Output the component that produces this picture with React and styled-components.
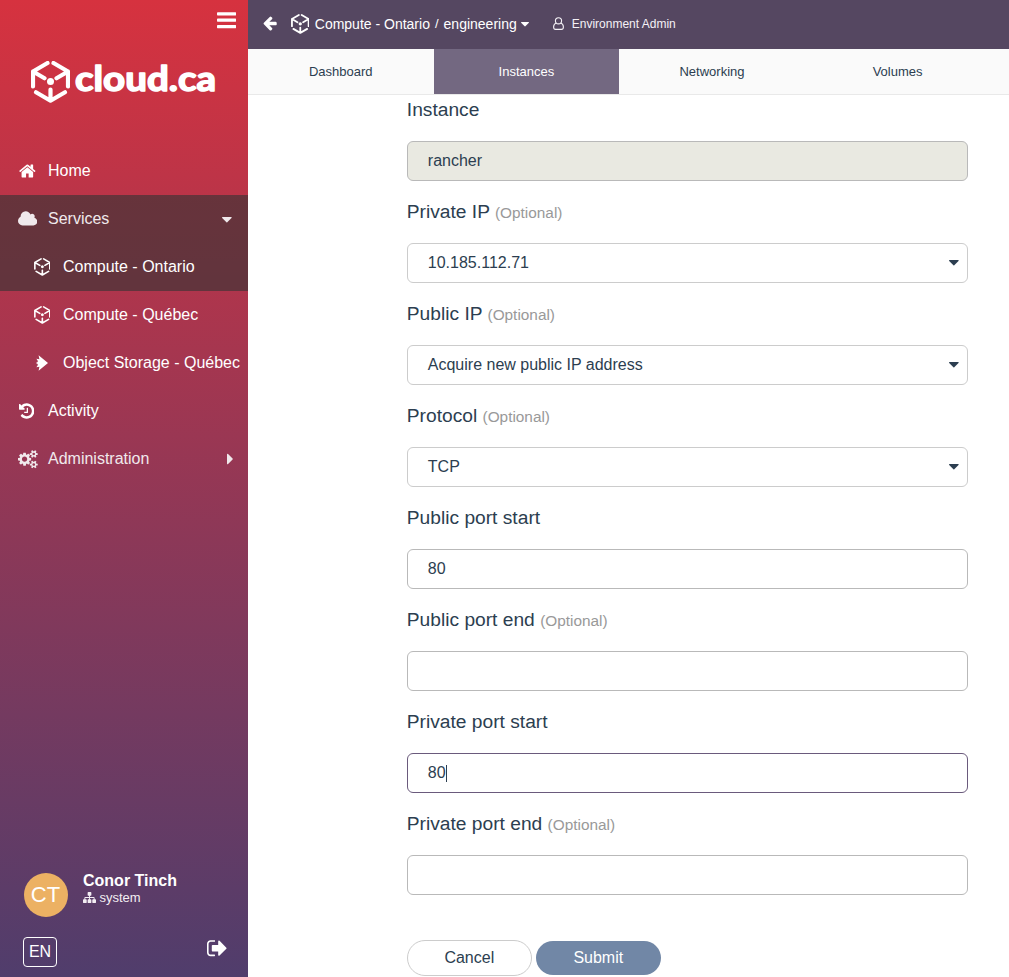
import React from "react";
import styled, { createGlobalStyle } from "styled-components";

const Global = createGlobalStyle`
  *, *::before, *::after { box-sizing: border-box; }
  body { margin: 0; font-family: "Liberation Sans", Arial, sans-serif; color: #2c3e50; background: #fff; overflow: hidden; }
`;

const GLYPHS = {
  bars: ["128 0 1536 1792", "M1664 1344v128q0 26-19 45t-45 19h-1408q-26 0-45-19t-19-45v-128q0-26 19-45t45-19h1408q26 0 45 19t19 45zm0-512v128q0 26-19 45t-45 19h-1408q-26 0-45-19t-19-45v-128q0-26 19-45t45-19h1408q26 0 45 19t19 45zm0-512v128q0 26-19 45t-45 19h-1408q-26 0-45-19t-19-45v-128q0-26 19-45t45-19h1408q26 0 45 19t19 45z"],
  home: ["64 0 1664 1792", "M1472 992v480q0 26-19 45t-45 19h-384v-384h-256v384h-384q-26 0-45-19t-19-45v-480q0-1 .5-3t.5-3l575-474 575 474q1 2 1 6zm223-69l-62 74q-8 9-21 11h-3q-13 0-21-7l-692-577-692 577q-12 8-24 7-13-2-21-11l-62-74q-8-10-7-23.5t11-21.5l719-599q32-26 76-26t76 26l244 204v-195q0-14 9-23t23-9h192q14 0 23 9t9 23v408l219 182q10 8 11 21.5t-7 23.5z"],
  cloud: ["64 0 1920 1792", "M1984 1152q0 159-112.5 271.5t-271.5 112.5h-1088q-185 0-316.5-131.5t-131.5-316.5q0-132 71-241.5t187-163.5q-2-28-2-43 0-212 150-362t362-150q158 0 286.5 88t187.5 230q70-62 166-62 106 0 181 75t75 181q0 75-41 138 129 30 213 134.5t84 239.5z"],
  history: ["128 0 1536 1792", "M1664 896q0 156-61 298t-164 245-245 164-298 61q-172 0-327-72.5t-264-204.5q-7-10-6.5-22.5t8.5-20.5l137-138q10-9 25-9 16 2 23 12 73 95 179 147t225 52q104 0 198.5-40.5t163.5-109.5 109.5-163.5 40.5-198.5-40.5-198.5-109.5-163.5-163.5-109.5-198.5-40.5q-98 0-188 35.5t-160 101.5l137 138q31 30 14 69-17 40-59 40h-448q-26 0-45-19t-19-45v-448q0-42 40-59 39-17 69 14l130 129q107-101 244.5-156.5t284.5-55.5q156 0 298 61t245 164 164 245 61 298zm-640-288v448q0 14-9 23t-23 9h-320q-14 0-23-9t-9-23v-64q0-14 9-23t23-9h224v-352q0-14 9-23t23-9h64q14 0 23 9t9 23z"],
  cogs: ["-64 0 1920 1792", "M832 896q0-106-75-181t-181-75-181 75-75 181 75 181 181 75 181-75 75-181zm768 512q0-52-38-90t-90-38-90 38-38 90q0 53 37.5 90.5t90.5 37.5 90.5-37.5 37.5-90.5zm0-1024q0-52-38-90t-90-38-90 38-38 90q0 53 37.5 90.5t90.5 37.5 90.5-37.5 37.5-90.5zm-384 421v185q0 10-7 19.5t-16 10.5l-155 24q-11 35-32 76 34 48 90 115 7 11 7 20 0 12-7 19-23 30-82.5 89.5t-78.5 59.5q-11 0-21-7l-115-90q-37 19-77 31-11 108-23 155-7 24-30 24h-186q-11 0-20-7.5t-10-17.5l-23-153q-34-10-75-31l-118 89q-7 7-20 7-11 0-21-8-144-133-144-160 0-9 7-19 10-14 41-53t47-61q-23-44-35-82l-152-24q-10-1-17-9.5t-7-19.5v-185q0-10 7-19.5t16-10.5l155-24q11-35 32-76-34-48-90-115-7-11-7-20 0-12 7-20 22-30 82-89t79-59q11 0 21 7l115 90q34-18 77-32 11-108 23-154 7-24 30-24h186q11 0 20 7.5t10 17.5l23 153q34 10 75 31l118-89q8-7 20-7 11 0 21 8 144 133 144 160 0 8-7 19-12 16-42 54t-45 60q23 48 34 82l152 23q10 2 17 10.5t7 19.5zm640 533v140q0 16-149 31-12 27-30 52 51 113 51 138 0 4-4 7-122 71-124 71-8 0-46-47t-52-68q-20 2-30 2t-30-2q-14 21-52 68t-46 47q-2 0-124-71-4-3-4-7 0-25 51-138-18-25-30-52-149-15-149-31v-140q0-16 149-31 13-29 30-52-51-113-51-138 0-4 4-7 4-2 35-20t59-34 30-16q8 0 46 46.5t52 67.5q20-2 30-2t30 2q51-71 92-112l6-2q4 0 124 70 4 3 4 7 0 25-51 138 17 23 30 52 149 15 149 31zm0-1024v140q0 16-149 31-12 27-30 52 51 113 51 138 0 4-4 7-122 71-124 71-8 0-46-47t-52-68q-20 2-30 2t-30-2q-14 21-52 68t-46 47q-2 0-124-71-4-3-4-7 0-25 51-138-18-25-30-52-149-15-149-31v-140q0-16 149-31 13-29 30-52-51-113-51-138 0-4 4-7 4-2 35-20t59-34 30-16q8 0 46 46.5t52 67.5q20-2 30-2t30 2q51-71 92-112l6-2q4 0 124 70 4 3 4 7 0 25-51 138 17 23 30 52 149 15 149 31z"],
  sitemap: ["0 0 1792 1792", "M1792 1248v320q0 40-28 68t-68 28h-320q-40 0-68-28t-28-68v-320q0-40 28-68t68-28h96v-192h-512v192h96q40 0 68 28t28 68v320q0 40-28 68t-68 28h-320q-40 0-68-28t-28-68v-320q0-40 28-68t68-28h96v-192h-512v192h96q40 0 68 28t28 68v320q0 40-28 68t-68 28h-320q-40 0-68-28t-28-68v-320q0-40 28-68t68-28h96v-192q0-52 38-90t90-38h512v-192h-96q-40 0-68-28t-28-68v-320q0-40 28-68t68-28h320q40 0 68 28t28 68v320q0 40-28 68t-68 28h-96v192h512q52 0 90 38t38 90v192h96q40 0 68 28t28 68z"],
  signOut: ["64 0 1600 1792", "M704 1440q0 4 1 20t.5 26.5-3 23.5-10 19.5-20.5 6.5h-320q-119 0-203.5-84.5t-84.5-203.5v-704q0-119 84.5-203.5t203.5-84.5h320q13 0 22.5 9.5t9.5 22.5q0 4 1 20t.5 26.5-3 23.5-10 19.5-20.5 6.5h-320q-66 0-113 47t-47 113v704q0 66 47 113t113 47h312l11.5 1 11.5 3 8 5.5 7 9 2 13.5zm928-544q0 26-19 45l-544 544q-19 19-45 19t-45-19-19-45v-288h-448q-26 0-45-19t-19-45v-384q0-26 19-45t45-19h448v-288q0-26 19-45t45-19 45 19l544 544q19 19 19 45z"],
  arrowLeft: ["128 0 1536 1792", "M1664 896v128q0 53-32.5 90.5t-84.5 37.5h-704l293 294q38 36 38 90t-38 90l-75 76q-37 37-90 37-52 0-91-37l-651-652q-37-37-37-90 0-52 37-91l651-650q38-38 91-38 52 0 90 38l75 74q38 38 38 91t-38 91l-293 293h704q52 0 84.5 37.5t32.5 90.5z"],
  caretDown: ["384 0 1024 1792", "M1408 704q0 26-19 45l-448 448q-19 19-45 19t-45-19l-448-448q-19-19-19-45t19-45 45-19h896q26 0 45 19t19 45z"],
  caretRight: ["608 0 576 1792", "M1184 896q0 26-19 45l-448 448q-19 19-45 19t-45-19-19-45v-896q0-26 19-45t45-19 45 19l448 448q19 19 19 45z"],
};

const Glyph = styled.svg`
  display: block;
  flex: none;
  height: ${(p) => p.$size}px;
  width: auto;
  margin-bottom: ${(p) => p.$lift || 0}px;
  fill: currentColor;
`;

function Icon({ name, size = 18, lift }) {
  const [box, d] = GLYPHS[name];
  return (
    <Glyph viewBox={box} $size={size} $lift={lift} aria-hidden="true">
      <path d={d} />
    </Glyph>
  );
}

function Cube({ size = 18, weight = 4.2 }) {
  return (
    <Glyph viewBox="0 0 39 42" $size={size} aria-hidden="true">
      <g fill="none" stroke="currentColor" strokeWidth={weight} strokeLinecap="round" strokeLinejoin="round">
        <path d="M16.5 2 2 10.500V25.500M2 10.500l11.500 6.800" />
        <path d="M22.500 2 37 10.500V25.500M37 10.500l-11.500 6.800" />
        <path d="M5 31.200 19.500 39.700 34 31.200M19.500 39.700V28.500" />
      </g>
      <circle cx="19.500" cy="20.600" r="3.500" />
    </Glyph>
  );
}

function StorageArrow() {
  return (
    <Glyph viewBox="0 0 12 16" $size={16} aria-hidden="true">
      <path d="M2.600 .2 12 8 2.600 15.800 3.400 11.700.4 12.300 2.200 9.600 0 8.800 1.800 8 0 7.200 2.200 6.400.4 3.700 3.400 4.300Z" />
    </Glyph>
  );
}

function PersonOutline() {
  return (
    <Glyph viewBox="0 0 11 13" $size={13} aria-hidden="true">
      <g fill="none" stroke="currentColor" strokeWidth="1.100">
        <circle cx="5.500" cy="3.800" r="3.100" />
        <path d="M3.200 6C1.400 6.600.6 8 .6 10c0 1.500.8 2.400 2 2.400h5.800c1.200 0 2-.9 2-2.400 0-2-.8-3.400-2.600-4" />
      </g>
    </Glyph>
  );
}

const Layout = styled.div`
  display: flex;
  height: 977px;
`;

const Sidebar = styled.aside`
  width: 248px;
  flex: none;
  display: flex;
  flex-direction: column;
  color: #fff;
  background: linear-gradient(#d6323f, #503d6c);
`;

const MenuToggle = styled.div`
  display: flex;
  justify-content: flex-end;
  padding: 9px 12px 0 0;
`;

const Brand = styled.div`
  display: flex;
  align-items: flex-start;
  height: 86px;
  margin-top: 30px;
  padding-left: 31px;
`;

const Wordmark = styled.svg`
  display: block;
  width: 146px;
  height: 42px;
  margin-left: 3px;
  overflow: visible;
  fill: #fff;
  stroke: #fff;
  stroke-width: 1.5px;
  stroke-linejoin: round;
  font: 700 33.5px Lato, sans-serif;
`;

const NavItem = styled.a`
  display: flex;
  align-items: center;
  height: 48px;
  padding-left: ${(p) => (p.$sub ? 26 : 18)}px;
  padding-right: ${(p) => p.$end || 0}px;
  font-size: 16px;
  white-space: nowrap;
  color: ${(p) => (p.$dim ? "#f0e9ec" : "#fff")};
  background: ${(p) => (p.$active ? "rgba(46, 51, 51, 0.6)" : "none")};
`;

const NavIcon = styled.span`
  display: flex;
  justify-content: ${(p) => (p.$sub ? "center" : "flex-start")};
  width: ${(p) => (p.$sub ? 32 : 30)}px;
  margin-right: ${(p) => (p.$sub ? 5 : 0)}px;
  padding-left: ${(p) => p.$inset || 0}px;
`;

const NavText = styled.span`
  flex: 1;
`;

const Account = styled.div`
  display: flex;
  margin-top: auto;
  padding-left: 24px;
`;

const Avatar = styled.div`
  display: flex;
  align-items: center;
  justify-content: center;
  width: 44px;
  height: 44px;
  margin-top: 1px;
  padding-right: 1px;
  border-radius: 50%;
  background: #ecb163;
  font-size: 22px;
`;

const Person = styled.div`
  margin-left: 15px;
  line-height: 17px;
`;

const PersonName = styled.div`
  font-size: 16px;
  font-weight: 700;
`;

const Org = styled.div`
  display: flex;
  align-items: center;
  gap: 3.5px;
  font-size: 13px;
  color: #f3eef3;
`;

const SideFooter = styled.div`
  display: flex;
  align-items: flex-start;
  justify-content: space-between;
  height: 40px;
  margin-top: 20px;
  padding: 0 21px 0 23px;
`;

const Language = styled.div`
  width: 34px;
  height: 30px;
  border: 1px solid #fff;
  border-radius: 4px;
  font-size: 16px;
  line-height: 28px;
  text-align: center;
`;

const Page = styled.main`
  flex: 1;
  min-width: 0;
`;

const TopBar = styled.header`
  display: flex;
  align-items: center;
  height: 49px;
  padding: 0 0 2px 15px;
  background: #554761;
  color: #fff;
  font-size: 14px;
`;

const Crumb = styled.div`
  display: flex;
  align-items: center;
  gap: 5px;
  margin-left: 14px;
`;

const CrumbName = styled.span`
  margin-left: ${(p) => p.$lead || 0}px;
  margin-right: ${(p) => p.$trail || 0}px;
`;

const Slash = styled.span`
  font-size: 13px;
`;

const Role = styled.div`
  display: flex;
  align-items: center;
  gap: 8px;
  margin-left: 24px;
  font-size: 12px;
  color: #f4f1f6;
`;

const Tabs = styled.nav`
  display: flex;
  height: 46px;
  border-bottom: 1px solid #e9e9e9;
  background: #fafafa;
`;

const Tab = styled.a`
  width: 185.6px;
  font-size: 13px;
  line-height: 45px;
  text-align: center;
  color: ${(p) => (p.$active ? "#fff" : "#2c3e50")};
  background: ${(p) => (p.$active ? "#736881" : "none")};
`;

const Form = styled.form`
  width: 561px;
  margin-left: 158.8px;
`;

const Field = styled.div`
  height: 102px;
`;

const Label = styled.label`
  display: block;
  height: 46px;
  font-size: 19.2px;
  line-height: 29px;
`;

const Optional = styled.span`
  font-size: 15.36px;
  color: #999;
`;

const Control = styled.div`
  display: flex;
  align-items: center;
  justify-content: space-between;
  height: 40px;
  padding: 0 7.8px 0 20px;
  border: 1px solid ${(p) => (p.$focused ? "#6a5a7c" : p.$select ? "#ccc" : "#b9b9b9")};
  border-radius: 6px;
  background: ${(p) => (p.$disabled ? "#e9e9e1" : "#fff")};
  font-size: 16px;
`;

const Value = styled.span`
  display: flex;
  align-items: center;
`;

const Caret = styled.span`
  width: 1px;
  height: 17px;
  background: #2c3e50;
`;

const Actions = styled.div`
  display: flex;
  align-items: center;
  gap: 4px;
  margin-top: 29px;
`;

const Button = styled.button`
  width: 125px;
  height: ${(p) => (p.$primary ? 34 : 36)}px;
  padding: 0 0 1px;
  border: ${(p) => (p.$primary ? "0" : "1px solid #ccc")};
  border-radius: 18px;
  background: ${(p) => (p.$primary ? "#7187a6" : "#fff")};
  color: ${(p) => (p.$primary ? "#fff" : "#2c3e50")};
  font: 16px "Liberation Sans", Arial, sans-serif;
`;

const FIELDS = [
  { label: "Instance", value: "rancher", disabled: true },
  { label: "Private IP", value: "10.185.112.71", optional: true, select: true },
  { label: "Public IP", value: "Acquire new public IP address", optional: true, select: true },
  { label: "Protocol", value: "TCP", optional: true, select: true },
  { label: "Public port start", value: "80" },
  { label: "Public port end", value: "", optional: true },
  { label: "Private port start", value: "80", focused: true },
  { label: "Private port end", value: "", optional: true },
];

export default function App() {
  return (
    <Layout>
      <Global />
      <Sidebar>
        <MenuToggle><Icon name="bars" size={22.4} /></MenuToggle>
        <Brand>
          <Cube size={42} />
          <Wordmark>
            <text x="2" y="29.5" textLength="141" lengthAdjust="spacingAndGlyphs">cloud.ca</text>
          </Wordmark>
        </Brand>
        <NavItem>
          <NavIcon $inset={1}><Icon name="home" /></NavIcon>
          <NavText>Home</NavText>
        </NavItem>
        <NavItem $active $dim $end={16}>
          <NavIcon><Icon name="cloud" /></NavIcon>
          <NavText>Services</NavText>
          <Icon name="caretDown" size={17} />
        </NavItem>
        <NavItem $sub $active>
          <NavIcon $sub><Cube size={18} weight={3.8} /></NavIcon>
          <NavText>Compute - Ontario</NavText>
        </NavItem>
        <NavItem $sub>
          <NavIcon $sub><Cube size={18} weight={3.8} /></NavIcon>
          <NavText>Compute - Québec</NavText>
        </NavItem>
        <NavItem $sub>
          <NavIcon $sub><StorageArrow /></NavIcon>
          <NavText>Object Storage - Québec</NavText>
        </NavItem>
        <NavItem>
          <NavIcon $inset={1}><Icon name="history" /></NavIcon>
          <NavText>Activity</NavText>
        </NavItem>
        <NavItem $dim $end={15}>
          <NavIcon><Icon name="cogs" size={18.4} /></NavIcon>
          <NavText>Administration</NavText>
          <Icon name="caretRight" size={18} />
        </NavItem>
        <Account>
          <Avatar>CT</Avatar>
          <Person>
            <PersonName>Conor Tinch</PersonName>
            <Org><Icon name="sitemap" size={13} />system</Org>
          </Person>
        </Account>
        <SideFooter>
          <Language>EN</Language>
          <Icon name="signOut" size={22.4} />
        </SideFooter>
      </Sidebar>
      <Page>
        <TopBar>
          <Icon name="arrowLeft" size={16} lift={1} />
          <Crumb>
            <Cube size={20} weight={3.8} />
            <CrumbName $lead={0.5}>Compute - Ontario</CrumbName>
            <Slash>/</Slash>
            <CrumbName $trail={-1}>engineering</CrumbName>
            <Icon name="caretDown" size={14} />
          </Crumb>
          <Role><PersonOutline />Environment Admin</Role>
        </TopBar>
        <Tabs>
          <Tab>Dashboard</Tab>
          <Tab $active>Instances</Tab>
          <Tab>Networking</Tab>
          <Tab>Volumes</Tab>
        </Tabs>
        <Form>
          {FIELDS.map((f) => (
            <Field key={f.label}>
              <Label>
                {f.label} {f.optional && <Optional>(Optional)</Optional>}
              </Label>
              <Control $disabled={f.disabled} $focused={f.focused} $select={f.select}>
                <Value>{f.value}{f.focused && <Caret />}</Value>
                {f.select && <Icon name="caretDown" size={17} lift={2} />}
              </Control>
            </Field>
          ))}
          <Actions>
            <Button type="button">Cancel</Button>
            <Button type="button" $primary>Submit</Button>
          </Actions>
        </Form>
      </Page>
    </Layout>
  );
}
